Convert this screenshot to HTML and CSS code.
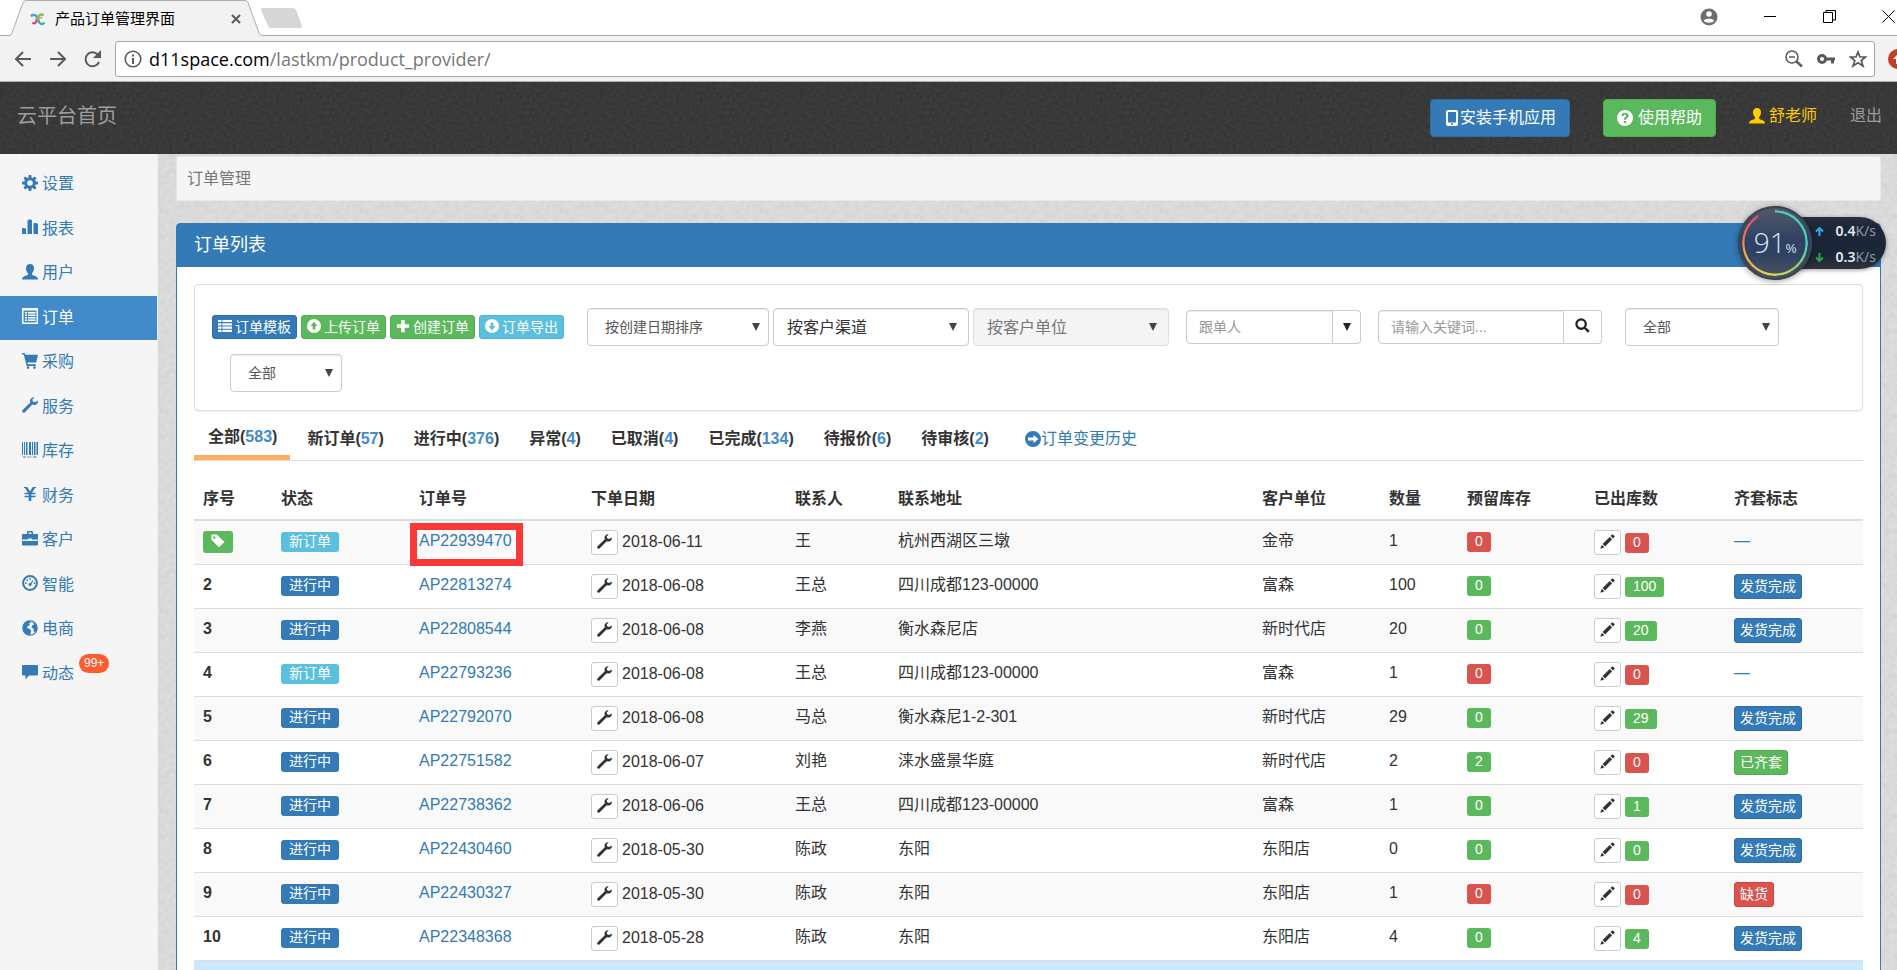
FILE: index.html
```html
<!DOCTYPE html>
<html lang="zh-CN">
<head>
    <meta charset="UTF-8">
    <title>产品订单管理界面</title>
    <link rel="stylesheet" href="styles.css">
</head>
<body>
    <!-- 图标 -->
    <svg class="sprite" aria-hidden="true">
        <symbol id="i-cog" viewBox="0 0 16 16"><circle cx="8" cy="8" r="4.3" fill="none" stroke="currentColor" stroke-width="3"/><path d="M6.8 0h2.4l.5 3H6.300zM6.800 16h2.400l.5-3H6.300zM0 6.800v2.400l3 .5V6.300zM16 6.800v2.400l-3 .5V6.300zM1.500 3.200l1.700-1.700 2.500 1.800-2.400 2.400zM14.500 3.200l-1.700-1.700-2.500 1.800 2.400 2.400zM1.500 12.800l1.700 1.700 2.500-1.800-2.400-2.400zM14.500 12.800l-1.700 1.700-2.500-1.800 2.400-2.400z"/></symbol>
        <symbol id="i-stats" viewBox="0 0 16 16"><path d="M0 9.500a.5.5 0 0 1 .5-.5h2a1.500 1.500 0 0 1 1.500 1.500V15H0zM5.500 2A1.500 1.500 0 0 1 7 .5h1.500A1.500 1.500 0 0 1 10 2v13H5.500zM11.500 5a1 1 0 0 1 1-1H14a2 2 0 0 1 2 2v9h-4.500z"/></symbol>
        <symbol id="i-user" viewBox="0 0 16 16"><path d="M8 0c2.600 0 4 1.700 4 4.300 0 2-.8 3.700-1.700 4.700-.5.600-.5 1.600.2 2 .8.500 3.100 1 4.300 1.900.8.600 1.200 1.300 1.200 2.600H0c0-1.300.4-2 1.200-2.600 1.200-.9 3.500-1.400 4.300-1.900.7-.4.7-1.400.2-2C4.800 8 4 6.300 4 4.300 4 1.700 5.400 0 8 0z"/></symbol>
        <symbol id="i-list-alt" viewBox="0 0 16 16"><path fill-rule="evenodd" d="M0 0h16v16H0zM1.500 2.500v12h13v-12zM3 4h2v1.500H3zM6 4h7.500v1.500H6zM3 6.500h2V8H3zM6 6.500h7.500V8H6zM3 9h2v1.500H3zM6 9h7.500v1.500H6zM3 11.500h2V13H3zM6 11.500h7.500V13H6z"/></symbol>
        <symbol id="i-cart" viewBox="0 0 16 16"><path d="M0 0h2.500l.9 1.800H16l-1.800 7.700H5.300l.5 1.800h8V13H4.600L1.800 1.500H0z"/><circle cx="6" cy="14.600" r="1.300"/><circle cx="12.500" cy="14.600" r="1.300"/></symbol>
        <symbol id="i-wrench" viewBox="0 0 16 16"><path d="M15.900 3.600c.3 2-1 3.900-2.900 4.300-1 .2-1.800 0-2.600-.3l-7.500 7.700a1.500 1.500 0 0 1-2.200-2.200l7.600-7.500C7.300 3 9 .5 11.700.3l.8.100-2.100 2 .4 2.200 2.300.6z"/></symbol>
        <symbol id="i-barcode" viewBox="0 0 16 16"><path d="M0 0h1v13H0zM2 0h1v13H2zM4 0h1.500v13H4zM7 0h2v13H7zM10 0h1v13h-1zM12 0h1.500v13H12zM14.500 0H16v13h-1.500zM1 14.500h3v1H1zM5.500 14.500h2v1h-2zM8.500 14.500h1v1h-1zM11 14.500h3.500v1H11z"/></symbol>
        <symbol id="i-yen" viewBox="0 0 16 16"><path d="M2 1h3.200L8 5.300 10.800 1H14v1h-1L10 6.800h3.500v1.500H9.300v1.400h4.200v1.500H9.300V15H6.700v-3.800H2.500V9.700h4.200V8.300H2.500V6.800H6L3 2H2z"/></symbol>
        <symbol id="i-briefcase" viewBox="0 0 16 16"><path d="M5 3V1.200C5 .5 5.500 0 6.200 0h3.600c.7 0 1.200.5 1.200 1.200V3h4.300l.7.700V8.500h-6V7.500H6v1H0V3.700L.7 3zM6.500 3h3V1.500h-3zM0 10h16v3.800l-.7.700H.7l-.7-.7z"/></symbol>
        <symbol id="i-dashboard" viewBox="0 0 16 16"><circle cx="8" cy="8" r="6.900" fill="none" stroke="currentColor" stroke-width="2"/><circle cx="8" cy="9.500" r="1.500"/><path d="M8 9l2.600-4 .8.500L9 10zM3 7.500h1.500V9H3zM4.500 4.500H6V6H4.500zM7.300 3.300h1.500v1.400H7.300zM11.700 7.500h1.500V9h-1.500z"/></symbol>
        <symbol id="i-globe" viewBox="0 0 16 16"><circle cx="8" cy="8" r="7.200" fill="none" stroke="currentColor" stroke-width="1.200"/><path d="M1.200 5.500C2.500 2.500 4.500 1 7.500.8L9 2.500 7 3.300 8 5 5.500 6.200 5 8l2.500.8 1.700 2L8 15.200C3 15 .5 11 1.200 5.500zM11 2l3 2.800 1.200 4.200-2 3.500-1.700-1.200.3-2.500-2.300-1L10 5.500l1.800-.8z"/></symbol>
        <symbol id="i-comment" viewBox="0 0 16 16"><path d="M.8 1h14.400l.8.800v9l-.8.800H7L3.500 15.500v-3.900H.8l-.8-.8v-9z"/></symbol>
        <symbol id="i-th-list" viewBox="0 0 16 16"><path d="M0 1h4v2.500H0zM5 1h11v2.500H5zM0 4.800h4v2.500H0zM5 4.800h11v2.500H5zM0 8.600h4v2.500H0zM5 8.600h11v2.500H5zM0 12.400h4v2.500H0zM5 12.400h11v2.500H5z"/></symbol>
        <symbol id="i-up" viewBox="0 0 16 16"><path fill-rule="evenodd" d="M8 0a8 8 0 1 1 0 16A8 8 0 0 1 8 0zm0 3L4 8h2.500v4h3V8H12z"/></symbol>
        <symbol id="i-down" viewBox="0 0 16 16"><path fill-rule="evenodd" d="M8 0a8 8 0 1 1 0 16A8 8 0 0 1 8 0zm0 13l4-5H9.500V4h-3v4H4z"/></symbol>
        <symbol id="i-right" viewBox="0 0 16 16"><path fill-rule="evenodd" d="M8 0a8 8 0 1 1 0 16A8 8 0 0 1 8 0zm5.500 8l-5-4v2.500H3v3h5.500V12z"/></symbol>
        <symbol id="i-plus" viewBox="0 0 16 16"><path d="M6 1h4v5h5v4h-5v5H6v-5H1V6h5z"/></symbol>
        <symbol id="i-search" viewBox="0 0 16 16"><circle cx="6.500" cy="6.500" r="5" fill="none" stroke="currentColor" stroke-width="2.400"/><path d="M9.500 11.200l1.700-1.700 4.500 4.300-1.900 1.900z"/></symbol>
        <symbol id="i-tag" viewBox="0 0 16 16"><path fill-rule="evenodd" d="M.5 1.500v5l8.500 8.700 6.500-6-9-8.700H1.500zM3.700 2.500a1.400 1.400 0 1 1 0 2.800 1.400 1.400 0 0 1 0-2.800z"/></symbol>
        <symbol id="i-pencil" viewBox="0 0 16 16"><path d="M12.800.6l.9-.2 2 2-.3.900-1.500 1.500-2.600-2.600zM10.300 3.100l2.600 2.600-7.400 7.500-2.700-2.600zM2 11.500l2.600 2.600-3.800 1.500-.4-.3z"/></symbol>
        <symbol id="i-phone" viewBox="0 0 16 16"><path fill-rule="evenodd" d="M4 0h8a2 2 0 0 1 2 2v12a2 2 0 0 1-2 2H4a2 2 0 0 1-2-2V2a2 2 0 0 1 2-2zM4 2v10.500h8V2zM7 13.300v1.500h2v-1.500z"/></symbol>
        <symbol id="i-question" viewBox="0 0 16 16"><path fill-rule="evenodd" d="M8 0a8 8 0 1 1 0 16A8 8 0 0 1 8 0zM6.800 11v2h2.300v-2zM4.500 6h2.300c0-1 .4-1.400 1.200-1.400.7 0 1.200.3 1.200 1S8.700 6.700 8 7.200c-.9.600-1.300 1.300-1.200 2.600h2.300c0-.8.300-1.100 1-1.600.9-.6 1.600-1.400 1.600-2.700C11.700 3.700 10.200 2.800 8 2.800 5.800 2.800 4.500 4 4.500 6z"/></symbol>
    </svg>

    <!-- 浏览器标签栏 -->
    <div class="tabstrip">
        <div class="browser-tab">
            <svg class="tab-shape" viewBox="0 0 258 36" preserveAspectRatio="none"><path d="M0 35.500H2Q4 35.500 5 33L16 2.500Q17 .5 19 .5H238Q240 .5 241 2.500L252 33Q253 35.500 256 35.500H258V37H0z" fill="#f2f2f2" stroke="#adadad"/></svg>
            <svg class="favicon" viewBox="0 0 18 16"><g fill="none" stroke-width="3"><path d="M0 3.500C5 1 8 3 7.500 7" stroke="#4a9fd8"/><path d="M7.500 7C7.500 11 6 14 2 12" stroke="#e0457c"/><path d="M16 3C12 .5 8.500 3 9.500 8" stroke="#7cc455"/><path d="M9.500 8C10 13 13 15 17 12" stroke="#38b5a8"/><path d="M10 6.500q2-1.500 4 0" stroke="#f2a33a" stroke-width="2"/></g></svg>
            <span class="tab-title">产品订单管理界面</span>
            <svg class="tab-close" viewBox="0 0 10 10"><path d="M1 1l8 8M9 1L1 9" stroke="#5a5a5a" stroke-width="2"/></svg>
        </div>
        <svg class="new-tab" viewBox="0 0 44 22"><path d="M3 1H33q2 0 3 2l6 16q0 2-2 2H11q-2 0-3-2L1 3q0-2 2-2z" fill="#d6d6d6"/></svg>
        <div class="window-controls">
            <svg class="profile" viewBox="0 0 18 18"><circle cx="9" cy="9" r="8.500" fill="#6e6e6e"/><circle cx="9" cy="6" r="2.800" fill="#fff"/><path d="M3.800 12.500C5 10 13 10 14.200 12.500 13 15.500 5 15.500 3.800 12.500z" fill="#fff"/></svg>
            <svg viewBox="0 0 13 13"><path d="M0 6.500h12" stroke="#000"/></svg>
            <svg viewBox="0 0 13 13"><path d="M.5 2.500h9v10h-9zM3 2.500v-2h9.500v9.500h-3" fill="none" stroke="#000"/></svg>
            <svg viewBox="0 0 13 13"><path d="M.5.5l12 12M12.500.5l-12 12" stroke="#000"/></svg>
        </div>
    </div>

    <!-- 地址栏 -->
    <div class="toolbar">
        <svg class="nav-icon" viewBox="0 0 18 18"><path d="M17 9H2M9 2L2 9l7 7" fill="none" stroke="#5a5a5a" stroke-width="2"/></svg>
        <svg class="nav-icon" viewBox="0 0 18 18"><path d="M1 9h15M9 2l7 7-7 7" fill="none" stroke="#5a5a5a" stroke-width="2"/></svg>
        <svg class="nav-icon" viewBox="0 0 18 18"><path d="M15 12a7 7 0 1 1-1.300-7.500" fill="none" stroke="#5a5a5a" stroke-width="2"/><path d="M17 0v8H9z" fill="#5a5a5a"/></svg>
        <div class="address">
            <svg class="info" viewBox="0 0 18 18"><circle cx="9" cy="9" r="7.800" fill="none" stroke="#5a5a5a" stroke-width="1.600"/><path d="M8 4.500h2v2H8zM8 8h2v6H8z" fill="#5a5a5a"/></svg>
            <span class="url">d11space.com<span class="url-path">/lastkm/product_provider/</span></span>
            <svg class="address-icon" viewBox="0 0 18 18"><circle cx="7" cy="7" r="6" fill="none" stroke="#5a5a5a" stroke-width="1.600"/><path d="M4 7h6" stroke="#5a5a5a" stroke-width="1.500"/><path d="M11.500 11.500l5.500 5" stroke="#5a5a5a" stroke-width="2.400"/></svg>
            <svg class="address-icon" viewBox="0 0 18 18"><circle cx="5" cy="9" r="3.500" fill="none" stroke="#5a5a5a" stroke-width="3"/><path d="M9 7.500h9v3h-1v3h-3v-3H9z" fill="#5a5a5a"/></svg>
            <svg class="address-icon" viewBox="0 0 18 18"><path d="M9 2l2 5h5.500l-4.300 3.500L14 16l-5-3.200L4 16l1.800-5.500L1.500 7H7z" fill="none" stroke="#5a5a5a" stroke-width="1.700"/></svg>
        </div>
        <svg class="extension" viewBox="0 0 20 20"><circle cx="10" cy="10" r="10" fill="#c83c2c"/><path d="M10 5l5 5h-3v5H8v-5H5z" fill="#fff"/></svg>
    </div>

    <header class="navbar">
        <a class="brand" href="#">云平台首页</a>
        <a class="btn btn-primary btn-nav" href="#"><svg class="icon"><use href="#i-phone"/></svg>安装手机应用</a>
        <a class="btn btn-success btn-nav help" href="#"><svg class="icon"><use href="#i-question"/></svg> 使用帮助</a>
        <a class="account" href="#"><svg class="icon"><use href="#i-user"/></svg>舒老师</a>
        <a class="logout" href="#">退出</a>
    </header>

    <div class="layout">
        <nav class="sidebar">
            <ul class="menu">
                <li><a href="#"><svg class="icon"><use href="#i-cog"/></svg>设置</a></li>
                <li><a href="#"><svg class="icon"><use href="#i-stats"/></svg>报表</a></li>
                <li><a href="#"><svg class="icon"><use href="#i-user"/></svg>用户</a></li>
                <li class="active"><a href="#"><svg class="icon"><use href="#i-list-alt"/></svg>订单</a></li>
                <li><a href="#"><svg class="icon"><use href="#i-cart"/></svg>采购</a></li>
                <li><a href="#"><svg class="icon"><use href="#i-wrench"/></svg>服务</a></li>
                <li><a href="#"><svg class="icon"><use href="#i-barcode"/></svg>库存</a></li>
                <li><a href="#"><svg class="icon"><use href="#i-yen"/></svg>财务</a></li>
                <li><a href="#"><svg class="icon"><use href="#i-briefcase"/></svg>客户</a></li>
                <li><a href="#"><svg class="icon"><use href="#i-dashboard"/></svg>智能</a></li>
                <li><a href="#"><svg class="icon"><use href="#i-globe"/></svg>电商</a></li>
                <li><a href="#"><svg class="icon"><use href="#i-comment"/></svg>动态<span class="badge">99+</span></a></li>
            </ul>
        </nav>

        <main class="main">
            <div class="breadcrumb">订单管理</div>

            <section class="panel">
                <h3 class="panel-heading">订单列表</h3>
                <div class="panel-body">
                    <form class="well">
                        <div class="btn-row">
                            <button type="button" class="btn btn-primary btn-xs"><svg class="icon"><use href="#i-th-list"/></svg>订单模板</button>
                            <button type="button" class="btn btn-success btn-xs"><svg class="icon"><use href="#i-up"/></svg>上传订单</button>
                            <button type="button" class="btn btn-success btn-xs"><svg class="icon"><use href="#i-plus"/></svg>创建订单</button>
                            <button type="button" class="btn btn-info btn-xs"><svg class="icon"><use href="#i-down"/></svg>订单导出</button>
                        </div>
                        <div class="select-row">
                            <select class="form-control sort" aria-label="排序"><option>按创建日期排序</option></select>
                            <select class="form-control combo" aria-label="客户渠道"><option>按客户渠道</option></select>
                            <select class="form-control combo" aria-label="客户单位" disabled><option>按客户单位</option></select>
                        </div>
                        <div class="input-group follower">
                            <input type="text" placeholder="跟单人" aria-label="跟单人">
                            <button type="button" aria-label="选择跟单人"><span class="caret"></span></button>
                        </div>
                        <div class="input-group search">
                            <input type="text" placeholder="请输入关键词..." aria-label="关键词">
                            <button type="button" aria-label="搜索"><svg class="icon"><use href="#i-search"/></svg></button>
                        </div>
                        <select class="form-control scope" aria-label="范围"><option>全部</option></select>
                        <select class="form-control kind" aria-label="类型"><option>全部</option></select>
                    </form>

                    <ul class="tabs">
                        <li class="active"><a href="#">全部(<span>583</span>)</a></li>
                        <li><a href="#">新订单(<span>57</span>)</a></li>
                        <li><a href="#">进行中(<span>376</span>)</a></li>
                        <li><a href="#">异常(<span>4</span>)</a></li>
                        <li><a href="#">已取消(<span>4</span>)</a></li>
                        <li><a href="#">已完成(<span>134</span>)</a></li>
                        <li><a href="#">待报价(<span>6</span>)</a></li>
                        <li><a href="#">待审核(<span>2</span>)</a></li>
                        <li class="history"><a href="#"><svg class="icon"><use href="#i-right"/></svg>订单变更历史</a></li>
                    </ul>

                    <table class="table">
                        <colgroup>
                            <col class="c-no"><col class="c-status"><col class="c-order"><col class="c-date"><col class="c-contact"><col>
                            <col class="c-client"><col class="c-no"><col class="c-stock"><col class="c-out"><col class="c-status">
                        </colgroup>
                        <thead>
                            <tr><th>序号</th><th>状态</th><th>订单号</th><th>下单日期</th><th>联系人</th><th>联系地址</th><th>客户单位</th><th>数量</th><th>预留库存</th><th>已出库数</th><th>齐套标志</th></tr>
                        </thead>
                        <tbody>
                            <tr>
                                <th><span class="label green tag"><svg class="icon"><use href="#i-tag"/></svg></span></th>
                                <td><span class="label cyan">新订单</span></td>
                                <td><a class="marked" href="#">AP22939470</a></td>
                                <td><button class="btn-tool" aria-label="修改日期"><svg class="icon"><use href="#i-wrench"/></svg></button>2018-06-11</td>
                                <td>王</td><td>杭州西湖区三墩</td><td>金帝</td><td>1</td>
                                <td><span class="label red">0</span></td>
                                <td><button class="btn-tool" aria-label="编辑"><svg class="icon"><use href="#i-pencil"/></svg></button><span class="label red">0</span></td>
                                <td><a href="#">—</a></td>
                            </tr>
                            <tr>
                                <th>2</th>
                                <td><span class="label blue">进行中</span></td>
                                <td><a href="#">AP22813274</a></td>
                                <td><button class="btn-tool" aria-label="修改日期"><svg class="icon"><use href="#i-wrench"/></svg></button>2018-06-08</td>
                                <td>王总</td><td>四川成都123-00000</td><td>富森</td><td>100</td>
                                <td><span class="label green">0</span></td>
                                <td><button class="btn-tool" aria-label="编辑"><svg class="icon"><use href="#i-pencil"/></svg></button><span class="label green">100</span></td>
                                <td><button class="btn btn-primary btn-flag">发货完成</button></td>
                            </tr>
                            <tr>
                                <th>3</th>
                                <td><span class="label blue">进行中</span></td>
                                <td><a href="#">AP22808544</a></td>
                                <td><button class="btn-tool" aria-label="修改日期"><svg class="icon"><use href="#i-wrench"/></svg></button>2018-06-08</td>
                                <td>李燕</td><td>衡水森尼店</td><td>新时代店</td><td>20</td>
                                <td><span class="label green">0</span></td>
                                <td><button class="btn-tool" aria-label="编辑"><svg class="icon"><use href="#i-pencil"/></svg></button><span class="label green">20</span></td>
                                <td><button class="btn btn-primary btn-flag">发货完成</button></td>
                            </tr>
                            <tr>
                                <th>4</th>
                                <td><span class="label cyan">新订单</span></td>
                                <td><a href="#">AP22793236</a></td>
                                <td><button class="btn-tool" aria-label="修改日期"><svg class="icon"><use href="#i-wrench"/></svg></button>2018-06-08</td>
                                <td>王总</td><td>四川成都123-00000</td><td>富森</td><td>1</td>
                                <td><span class="label red">0</span></td>
                                <td><button class="btn-tool" aria-label="编辑"><svg class="icon"><use href="#i-pencil"/></svg></button><span class="label red">0</span></td>
                                <td><a href="#">—</a></td>
                            </tr>
                            <tr>
                                <th>5</th>
                                <td><span class="label blue">进行中</span></td>
                                <td><a href="#">AP22792070</a></td>
                                <td><button class="btn-tool" aria-label="修改日期"><svg class="icon"><use href="#i-wrench"/></svg></button>2018-06-08</td>
                                <td>马总</td><td>衡水森尼1-2-301</td><td>新时代店</td><td>29</td>
                                <td><span class="label green">0</span></td>
                                <td><button class="btn-tool" aria-label="编辑"><svg class="icon"><use href="#i-pencil"/></svg></button><span class="label green">29</span></td>
                                <td><button class="btn btn-primary btn-flag">发货完成</button></td>
                            </tr>
                            <tr>
                                <th>6</th>
                                <td><span class="label blue">进行中</span></td>
                                <td><a href="#">AP22751582</a></td>
                                <td><button class="btn-tool" aria-label="修改日期"><svg class="icon"><use href="#i-wrench"/></svg></button>2018-06-07</td>
                                <td>刘艳</td><td>涞水盛景华庭</td><td>新时代店</td><td>2</td>
                                <td><span class="label green">2</span></td>
                                <td><button class="btn-tool" aria-label="编辑"><svg class="icon"><use href="#i-pencil"/></svg></button><span class="label red">0</span></td>
                                <td><button class="btn btn-success btn-flag">已齐套</button></td>
                            </tr>
                            <tr>
                                <th>7</th>
                                <td><span class="label blue">进行中</span></td>
                                <td><a href="#">AP22738362</a></td>
                                <td><button class="btn-tool" aria-label="修改日期"><svg class="icon"><use href="#i-wrench"/></svg></button>2018-06-06</td>
                                <td>王总</td><td>四川成都123-00000</td><td>富森</td><td>1</td>
                                <td><span class="label green">0</span></td>
                                <td><button class="btn-tool" aria-label="编辑"><svg class="icon"><use href="#i-pencil"/></svg></button><span class="label green">1</span></td>
                                <td><button class="btn btn-primary btn-flag">发货完成</button></td>
                            </tr>
                            <tr>
                                <th>8</th>
                                <td><span class="label blue">进行中</span></td>
                                <td><a href="#">AP22430460</a></td>
                                <td><button class="btn-tool" aria-label="修改日期"><svg class="icon"><use href="#i-wrench"/></svg></button>2018-05-30</td>
                                <td>陈政</td><td>东阳</td><td>东阳店</td><td>0</td>
                                <td><span class="label green">0</span></td>
                                <td><button class="btn-tool" aria-label="编辑"><svg class="icon"><use href="#i-pencil"/></svg></button><span class="label green">0</span></td>
                                <td><button class="btn btn-primary btn-flag">发货完成</button></td>
                            </tr>
                            <tr>
                                <th>9</th>
                                <td><span class="label blue">进行中</span></td>
                                <td><a href="#">AP22430327</a></td>
                                <td><button class="btn-tool" aria-label="修改日期"><svg class="icon"><use href="#i-wrench"/></svg></button>2018-05-30</td>
                                <td>陈政</td><td>东阳</td><td>东阳店</td><td>1</td>
                                <td><span class="label red">0</span></td>
                                <td><button class="btn-tool" aria-label="编辑"><svg class="icon"><use href="#i-pencil"/></svg></button><span class="label red">0</span></td>
                                <td><button class="btn btn-danger btn-flag">缺货</button></td>
                            </tr>
                            <tr>
                                <th>10</th>
                                <td><span class="label blue">进行中</span></td>
                                <td><a href="#">AP22348368</a></td>
                                <td><button class="btn-tool" aria-label="修改日期"><svg class="icon"><use href="#i-wrench"/></svg></button>2018-05-28</td>
                                <td>陈政</td><td>东阳</td><td>东阳店</td><td>4</td>
                                <td><span class="label green">0</span></td>
                                <td><button class="btn-tool" aria-label="编辑"><svg class="icon"><use href="#i-pencil"/></svg></button><span class="label green">4</span></td>
                                <td><button class="btn btn-primary btn-flag">发货完成</button></td>
                            </tr>
                            <tr class="total"><td colspan="11"></td></tr>
                        </tbody>
                    </table>
                </div>
            </section>
        </main>
    </div>

    <!-- 网速悬浮球 -->
    <div class="monitor">
        <div class="ball">
            <span class="ball-value">91</span><span class="ball-unit">%</span>
        </div>
        <div class="speeds">
            <div class="speed"><svg viewBox="0 0 9 9"><path d="M4.500 9V1M1 4.500l3.500-3.500L8 4.500" fill="none" stroke="#35a8e8" stroke-width="2"/></svg><b>0.4</b><span>K/s</span></div>
            <div class="speed"><svg viewBox="0 0 9 9"><path d="M4.500 0v8M1 4.500L4.500 8 8 4.500" fill="none" stroke="#27a844" stroke-width="2"/></svg><b>0.3</b><span>K/s</span></div>
        </div>
    </div>
</body>
</html>
```

FILE: styles.css
```css
* {
    box-sizing: border-box;
}

body {
    margin: 0;
    height: 100vh;
    overflow: hidden;
    display: flex;
    flex-direction: column;
    font-family: "Liberation Sans", Arial, "Noto Sans CJK SC", sans-serif;
    font-size: 16px;
    line-height: 22px;
    color: #333;
    background: #dcdcdc;
}

a {
    color: #337ab7;
    text-decoration: none;
}

ul {
    list-style: none;
    margin: 0;
    padding: 0;
}

button, input, select {
    font-family: inherit;
}

.sprite {
    position: absolute;
    width: 0;
    height: 0;
}

.icon {
    width: 16px;
    height: 16px;
    flex: none;
    fill: currentColor;
}

/* 浏览器外框 */
.tabstrip {
    flex: none;
    display: flex;
    align-items: center;
    height: 36px;
    padding: 0 2px 0 7px;
    background: #fff;
    border-bottom: 1px solid #adadad;
}

.browser-tab {
    position: relative;
    display: flex;
    align-items: center;
    width: 258px;
    height: 36px;
    padding: 3px 24px 0 22px;
}

.tab-shape {
    position: absolute;
    left: 0;
    top: 0;
    width: 100%;
    height: 100%;
}

.favicon {
    position: relative;
    width: 18px;
    height: 13px;
}

.tab-title {
    position: relative;
    flex: 1;
    padding-left: 8px;
    font-size: 15px;
    color: #000;
}

.tab-close {
    position: relative;
    width: 10px;
    height: 10px;
}

.new-tab {
    width: 44px;
    height: 22px;
    margin-left: -5px;
}

.window-controls {
    display: flex;
    align-items: center;
    gap: 46px;
    margin-left: auto;
    padding-bottom: 2px;
}

.window-controls svg {
    width: 13px;
    height: 13px;
}

.window-controls .profile {
    width: 18px;
    height: 18px;
}

.toolbar {
    flex: none;
    display: flex;
    align-items: center;
    height: 46px;
    padding-left: 14px;
    background: #f2f2f2;
    border-bottom: 1px solid #adadad;
}

.nav-icon {
    flex: none;
    width: 18px;
    height: 18px;
    margin-right: 17px;
}

.address {
    flex: 1;
    display: flex;
    align-items: center;
    height: 36px;
    margin-right: 13px;
    margin-left: -4px;
    padding: 0 7px 0 8px;
    background: #fff;
    border: 1px solid #a6a6a6;
    border-radius: 3px;
}

.info {
    width: 18px;
    height: 18px;
}

.url {
    flex: 1;
    padding-left: 7px;
    font-family: "Open Sans", "Noto Sans", sans-serif;
    font-size: 18px;
    color: #000;
}

.url-path {
    color: #777;
}

.address-icon {
    width: 18px;
    height: 18px;
    margin-left: 14px;
}

.extension {
    flex: none;
    width: 20px;
    height: 20px;
    margin-right: -11px;
}

/* 顶部导航 */
.navbar {
    flex: none;
    display: flex;
    align-items: center;
    height: 72px;
    padding: 0 15px 0 17px;
    background: #3d3d3d url("data:image/svg+xml,%3Csvg xmlns='http://www.w3.org/2000/svg' width='200' height='200'%3E%3Cfilter id='n'%3E%3CfeTurbulence type='fractalNoise' baseFrequency='.3' numOctaves='3' stitchTiles='stitch'/%3E%3CfeColorMatrix values='0 0 0 0 0 0 0 0 0 0 0 0 0 0 0 .3 0 0 0 -.08'/%3E%3C/filter%3E%3Crect width='200' height='200' filter='url(%23n)'/%3E%3C/svg%3E");
}

.brand {
    margin-right: auto;
    padding-bottom: 4px;
    font-size: 20px;
    color: #9d9d9d;
}

.btn {
    display: inline-flex;
    align-items: center;
    border: 1px solid;
    border-radius: 4px;
    color: #fff;
    white-space: nowrap;
}

.btn-primary {
    background: #337ab7;
    border-color: #2e6da4;
}

.btn-success {
    background: #5cb85c;
    border-color: #4cae4c;
}

.btn-info {
    background: #5bc0de;
    border-color: #46b8da;
}

.btn-danger {
    background: #d9534f;
    border-color: #d43f3a;
}

.btn-nav {
    height: 38px;
    padding: 0 13px;
}

.help {
    gap: 5px;
    margin: 0 33px;
}

.account, .logout {
    display: flex;
    align-items: center;
    gap: 4px;
    padding-bottom: 4px;
    color: #ffcc00;
}

.logout {
    margin-left: 33px;
    color: #9d9d9d;
}

/* 主体 */
.layout {
    flex: 1;
    display: flex;
    min-height: 0;
    background: #dedede url("data:image/svg+xml,%3Csvg xmlns='http://www.w3.org/2000/svg' width='200' height='200'%3E%3Cfilter id='n'%3E%3CfeTurbulence type='fractalNoise' baseFrequency='.2' numOctaves='3' stitchTiles='stitch'/%3E%3CfeColorMatrix values='0 0 0 0 0 0 0 0 0 0 0 0 0 0 0 .08 0 0 0 -.02'/%3E%3C/filter%3E%3Crect width='200' height='200' filter='url(%23n)'/%3E%3C/svg%3E");
}

.sidebar {
    flex: none;
    width: 158px;
    padding-top: 8px;
    background: #f5f5f5;
    border-right: 1px solid #eee;
}

.menu {
    display: grid;
    grid-auto-rows: 1fr;
    height: 534px;
}

.menu a {
    display: flex;
    align-items: center;
    height: 100%;
    padding-left: 22px;
}

.menu .icon {
    margin: 0 4px 3px 0;
}

.menu .active a {
    color: #fff;
    background: #428bca;
}

.badge {
    align-self: flex-start;
    height: 19px;
    margin: 2px 0 0 5px;
    padding: 0 5px;
    border-radius: 10px;
    font-size: 12px;
    line-height: 18px;
    color: #fff;
    background: #ff5b30;
}

.main {
    flex: 1;
    min-width: 0;
    padding: 2px 16px 0 18px;
}

.breadcrumb {
    height: 45px;
    padding: 11px 10px;
    border: 1px solid #e7e7e7;
    border-radius: 3px;
    color: #777;
    background: #f5f5f5;
}

.panel {
    margin-top: 22px;
    border: 1px solid #337ab7;
    border-radius: 4px;
    background: #fff;
}

.panel-heading {
    margin: 0;
    padding: 10px 17px 11px;
    font-size: 18px;
    font-weight: normal;
    color: #fff;
    background: #337ab7;
}

.panel-body {
    padding: 17px;
}

.well {
    display: flex;
    flex-wrap: wrap;
    align-items: center;
    row-gap: 8px;
    margin: 0;
    padding: 23px 17px 18px;
    border: 1px solid #ddd;
    border-radius: 4px;
    box-shadow: 0 1px 1px rgba(0,0,0,0.05);
}

.btn-row, .select-row {
    display: flex;
    align-items: center;
    gap: 4px;
}

.btn-row {
    margin-right: 23px;
}

.btn-xs {
    gap: 3px;
    height: 24px;
    padding: 0 5px 2px;
    border-radius: 3px;
    font-size: 14px;
}

.btn-xs .icon {
    width: 14px;
    height: 14px;
}

.form-control {
    appearance: none;
    height: 38px;
    padding: 0 17px;
    border: 1px solid #ccc;
    border-radius: 4px;
    font-size: 14px;
    color: #555;
    background: #fff url("data:image/svg+xml,%3Csvg xmlns='http://www.w3.org/2000/svg' width='8' height='8'%3E%3Cpath d='M0 0h8L4 8z' fill='%23444'/%3E%3C/svg%3E") no-repeat right 8px center;
    box-shadow: inset 0 1px 1px rgba(0,0,0,0.075);
}

.sort {
    width: 182px;
}

.combo {
    width: 196px;
    padding: 0 13px;
    font-size: 16px;
    color: #333;
    background-position: right 11px center;
}

.combo:disabled {
    color: #777;
    background-color: #f4f4f4;
    border-color: #ddd;
    opacity: 1;
}

.scope {
    width: 154px;
    margin-left: 23px;
}

.kind {
    width: 112px;
    margin-left: 18px;
}

.input-group {
    display: flex;
    height: 34px;
    margin-left: 17px;
}

.input-group input {
    min-width: 0;
    padding: 0 12px;
    border: 1px solid #ccc;
    border-radius: 4px 0 0 4px;
    font-size: 14px;
    box-shadow: inset 0 1px 1px rgba(0,0,0,0.075);
}

.input-group input::placeholder {
    color: #999;
}

.input-group button {
    display: flex;
    align-items: center;
    justify-content: center;
    padding: 0;
    border: 1px solid #ccc;
    border-left: 0;
    border-radius: 0 4px 4px 0;
    color: #222;
    background: #fff;
}

.follower input {
    width: 147px;
}

.follower button {
    width: 28px;
}

.search input {
    width: 186px;
}

.search button {
    width: 38px;
    padding-bottom: 3px;
}

.search .icon {
    width: 15px;
    height: 15px;
}

.caret {
    border: 4px solid transparent;
    border-top: 8px solid #222;
    border-bottom: 0;
}

/* 状态标签页 */
.tabs {
    display: flex;
    align-items: flex-end;
    height: 50px;
    border-bottom: 1px solid #ddd;
}

.tabs a {
    display: flex;
    align-items: center;
    height: 42px;
    padding: 0 15px;
    font-weight: bold;
    color: #333;
}

.tabs span {
    color: #428bca;
}

.tabs .active a {
    margin-right: 2px;
    padding: 0 13px 0 14px;
    border-bottom: 5px solid #ffaf5f;
}

.tabs .history a {
    padding-left: 21px;
    font-weight: normal;
    color: #337ab7;
}

/* 订单表 */
.table {
    width: 100%;
    table-layout: fixed;
    border-spacing: 0;
}

.c-no { width: 78px; }
.c-status { width: 138px; }
.c-order { width: 172px; }
.c-date { width: 204px; }
.c-contact { width: 103px; }
.c-client { width: 127px; }
.c-stock { width: 127px; }
.c-out { width: 140px; }

.table th, .table td {
    height: 44px;
    padding: 9px 9px 0;
    border-bottom: 1px solid #ddd;
    text-align: left;
    vertical-align: top;
    white-space: nowrap;
}

.table thead th {
    height: 60px;
    padding-top: 27px;
    border-bottom: 2px solid #ddd;
}

.table tbody tr:nth-child(odd) {
    background: #f9f9f9;
}

.table tbody tr.total:last-child {
    background: #c9e9ff;
}

.label {
    display: inline-block;
    height: 20px;
    padding: 0 8px;
    border-radius: 3px;
    font-size: 14px;
    line-height: 19px;
    color: #fff;
    vertical-align: middle;
}

.tag {
    height: 22px;
    padding: 3px 8px;
}

.tag .icon {
    display: block;
    width: 14px;
    height: 14px;
}

.green { background: #5cb85c; }
.red { background: #d9534f; }
.blue { background: #337ab7; }
.cyan { background: #5bc0de; }

.btn-tool {
    width: 27px;
    height: 25px;
    margin-right: 4px;
    padding: 0 0 2px;
    border: 1px solid #ccc;
    border-radius: 3px;
    color: #333;
    background: #fff;
    vertical-align: middle;
}

.btn-tool .icon {
    display: block;
    width: 15px;
    height: 15px;
    margin: auto;
}

.btn-flag {
    height: 25px;
    padding: 0 5px 3px;
    border-radius: 3px;
    font-size: 14px;
    vertical-align: top;
}

/* 红框标出的订单 */
.marked {
    position: relative;
}

.marked::after {
    content: "";
    position: absolute;
    inset: -9px -11px -17px -9px;
    border: 7px solid #fb3838;
}

/* 悬浮球 */
.monitor {
    position: absolute;
    top: 206px;
    right: 11px;
    display: flex;
    align-items: center;
}

.ball {
    position: relative;
    z-index: 1;
    display: flex;
    align-items: baseline;
    justify-content: center;
    width: 74px;
    height: 74px;
    border-radius: 50%;
    line-height: 72px;
    color: #dde6f2;
    background: linear-gradient(#555a68, #2f4263 45%, #2f4263 65%, #50535f);
    box-shadow: inset 0 0 0 2px #3d4453, 0 1px 6px rgba(0,0,0,0.4);
}

.ball::before {
    content: "";
    position: absolute;
    inset: 4px;
    border-radius: 50%;
    background: conic-gradient(#46cfd0, #4bd0b0 25%, #9bd86a 40%, #e2d84c 52%, #eab04a 68%, #e0705a 80%, #dd4f78 91%, transparent 91%);
    mask: radial-gradient(circle, transparent 30px, #000 31px);
}

.ball-value {
    font-family: "Open Sans", "Noto Sans", sans-serif;
    font-size: 28px;
    font-weight: 300;
}

.ball-unit {
    font-size: 12px;
}

.speeds {
    width: 96px;
    height: 52px;
    margin-left: -22px;
    padding: 1px 10px 0 25px;
    border-radius: 0 26px 26px 0;
    background: linear-gradient(#2b303c, #1b2638 20%, #1b2638 75%, #30333d);
    box-shadow: 0 1px 4px rgba(0,0,0,0.4);
}

.speed {
    display: flex;
    align-items: center;
    height: 26px;
    font-family: "Noto Sans", sans-serif;
    font-size: 14px;
    color: #8f98a6;
}

.speed svg {
    width: 9px;
    height: 9px;
    margin-right: auto;
}

.speed b {
    font-weight: 600;
    color: #e6eaf0;
}
```
